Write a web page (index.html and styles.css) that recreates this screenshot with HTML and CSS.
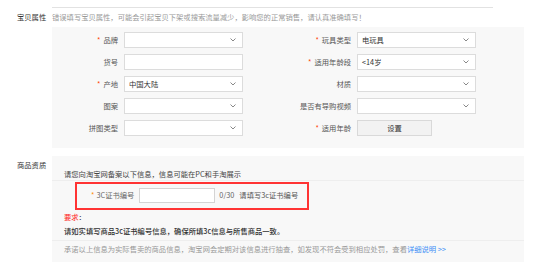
FILE: index.html
```html
<!doctype html>
<html lang="zh-CN">
    <head>
        <meta charset="UTF-8" />
        <title>宝贝属性</title>
        <link rel="stylesheet" href="styles.css">
    </head>

    <body>
        <div class="top-rule"></div>

        <div class="section attrs-section">
            <div class="section-label">宝贝属性</div>
            <div class="section-body">
                <p class="hint">错误填写宝贝属性，可能会引起宝贝下架或搜索流量减少，影响您的正常销售，请认真准确填写！</p>
                <div class="panel attrs">
                    <div class="field-label"><span class="req">*</span>品牌</div>
                    <div class="select">
                        <span></span>
                        <svg class="caret" width="6" height="4" viewBox="0 0 6 4"><polyline points="0.5,0.5 3,3 5.5,0.5" /></svg>
                    </div>
                    <div class="field-label"><span class="req">*</span>玩具类型</div>
                    <div class="select">
                        <span>电玩具</span>
                        <svg class="caret" width="6" height="4" viewBox="0 0 6 4"><polyline points="0.5,0.5 3,3 5.5,0.5" /></svg>
                    </div>

                    <div class="field-label">货号</div>
                    <div class="text-input"></div>
                    <div class="field-label"><span class="req">*</span>适用年龄段</div>
                    <div class="select">
                        <span>&lt;14岁</span>
                        <svg class="caret" width="6" height="4" viewBox="0 0 6 4"><polyline points="0.5,0.5 3,3 5.5,0.5" /></svg>
                    </div>

                    <div class="field-label"><span class="req">*</span>产地</div>
                    <div class="select">
                        <span>中国大陆</span>
                        <svg class="caret" width="6" height="4" viewBox="0 0 6 4"><polyline points="0.5,0.5 3,3 5.5,0.5" /></svg>
                    </div>
                    <div class="field-label">材质</div>
                    <div class="select">
                        <span></span>
                        <svg class="caret" width="6" height="4" viewBox="0 0 6 4"><polyline points="0.5,0.5 3,3 5.5,0.5" /></svg>
                    </div>

                    <div class="field-label">图案</div>
                    <div class="select">
                        <span></span>
                        <svg class="caret" width="6" height="4" viewBox="0 0 6 4"><polyline points="0.5,0.5 3,3 5.5,0.5" /></svg>
                    </div>
                    <div class="field-label">是否有导购视频</div>
                    <div class="select">
                        <span></span>
                        <svg class="caret" width="6" height="4" viewBox="0 0 6 4"><polyline points="0.5,0.5 3,3 5.5,0.5" /></svg>
                    </div>

                    <div class="field-label">拼图类型</div>
                    <div class="select">
                        <span></span>
                        <svg class="caret" width="6" height="4" viewBox="0 0 6 4"><polyline points="0.5,0.5 3,3 5.5,0.5" /></svg>
                    </div>
                    <div class="field-label"><span class="req">*</span>适用年龄</div>
                    <div class="cell-left">
                        <div class="btn">设置</div>
                    </div>
                </div>
            </div>
        </div>

        <div class="section quals-section">
            <div class="section-label">商品资质</div>
            <div class="panel quals">
                <p class="quals-intro">请您向淘宝网备案以下信息，信息可能在PC和手淘展示</p>
                <div class="cert-box">
                    <span class="req req-cert">*</span>
                    <span class="cert-label">3C证书编号</span>
                    <div class="cert-input"></div>
                    <span class="cert-count">0/30</span>
                    <span class="cert-tip">请填写3c证书编号</span>
                </div>
                <p class="demand"><span class="demand-title">要求</span>：</p>
                <p class="demand demand-text">请如实填写商品3c证书编号信息，确保所填3c信息与所售商品一致。</p>
                <p class="promise">承诺以上信息为实际售卖的商品信息，淘宝网会定期对该信息进行抽查，如发现不符会受到相应处罚，查看<a class="more-link" href="#">详细说明 &gt;&gt;</a></p>
            </div>
        </div>
    </body>
</html>
```

FILE: styles.css
```css
* {
    box-sizing: border-box;
}

body {
    margin: 0;
    background: #fff;
    color: #333;
    font-family: "Noto Sans CJK SC", "Noto Sans", sans-serif;
    font-size: 7.3px;
    line-height: 12px;
}

p {
    margin: 0;
}

.top-rule {
    margin: 7px 0 0 52px;
    width: 441px;
    height: 1px;
    background: #e2e2e2;
}

.section {
    display: flex;
}

.section-label {
    width: 52px;
    padding-left: 17px;
    flex-shrink: 0;
    color: #333;
}

.attrs-section {
    padding-top: 3px;
}

.hint {
    margin-bottom: 4px;
    color: #999;
}

.panel {
    width: 472px;
    background: #f8f8f8;
}

.attrs {
    display: grid;
    grid-template-columns: 66px 119px 102px 119px;
    grid-auto-rows: 16px;
    column-gap: 6px;
    row-gap: 6px;
    padding: 5px 0 12px;
}

.field-label {
    display: flex;
    align-items: center;
    justify-content: flex-end;
    color: #555;
    white-space: nowrap;
}

.req {
    color: #f40;
    margin-right: 3px;
}

.select,
.text-input {
    border: 1px solid #dcdcdc;
    background: #fff;
}

.select {
    display: flex;
    align-items: center;
    justify-content: space-between;
    padding: 0 6px 0 4px;
    color: #333;
}

.caret {
    fill: none;
    stroke: #888;
    stroke-width: 1;
}

.cell-left {
    display: flex;
}

.btn {
    width: 75px;
    border: 1px solid #d9d9d9;
    background: #f2f2f2;
    display: flex;
    align-items: center;
    justify-content: center;
    color: #333;
}

.quals-section {
    margin-top: 8px;
}

.quals-section .section-label {
    padding-top: 3px;
}

.quals {
    padding-bottom: 7px;
}

.quals-intro {
    padding: 12px 0 0 12px;
    border-bottom: 1px solid #eeeeee;
    color: #444;
}

.cert-box {
    margin: 1px 0 0 23px;
    width: 234px;
    height: 28px;
    border: 2px solid #f33;
    display: flex;
    align-items: center;
    padding: 0 0 2px 14px;
}

.req-cert {
    color: #f80;
    margin-right: 2px;
}

.cert-label {
    color: #666;
}

.cert-input {
    width: 76px;
    height: 15px;
    margin-left: 5px;
    border: 1px solid #d4d4d4;
    background: #fff;
}

.cert-count {
    margin-left: 4px;
    color: #666;
}

.cert-tip {
    margin-left: 5px;
    color: #555;
}

.demand {
    padding-left: 12px;
    line-height: 14px;
    color: #333;
}

.quals .demand:first-of-type {
    margin-top: 1px;
}

.demand-title {
    color: #f22;
}

.demand-text {
    font-weight: 500;
    color: #333;
}

.promise {
    margin-top: 2px;
    padding: 2px 0 0 12px;
    border-top: 1px solid #eeeeee;
    color: #999;
}

.more-link {
    color: #3a8ef6;
    text-decoration: none;
}
```
